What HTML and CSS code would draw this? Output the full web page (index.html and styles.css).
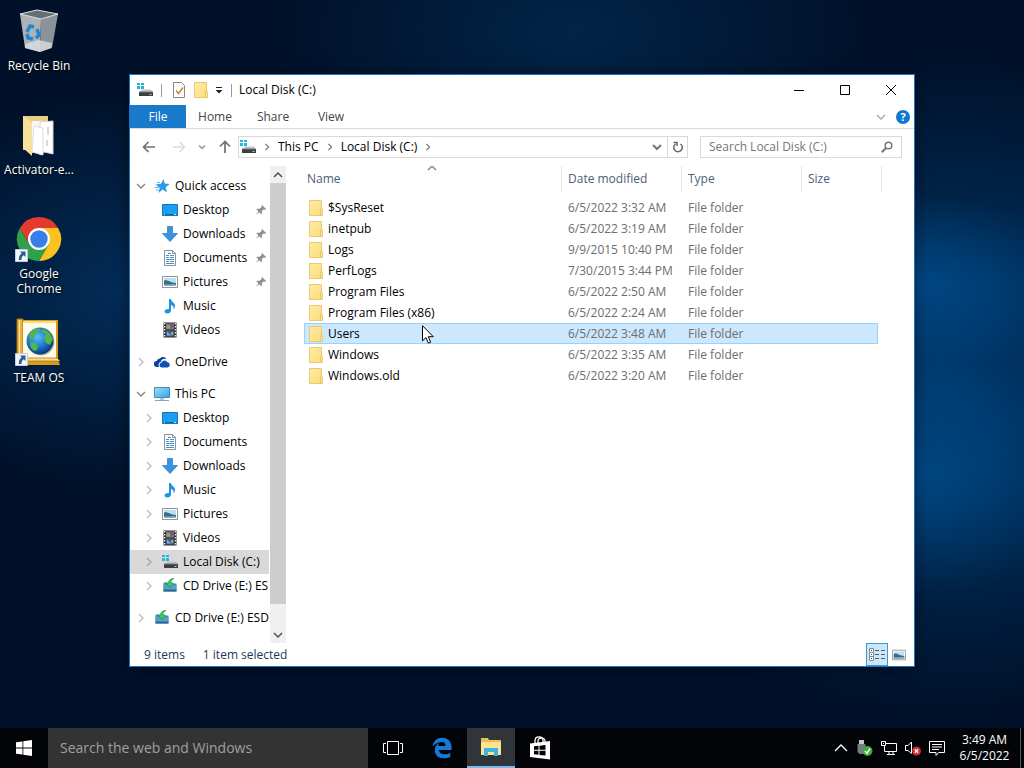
FILE: index.html
```
<!DOCTYPE html>
<html lang="en">

<head>
    <meta charset="UTF-8">
    <meta name="viewport" content="width=device-width, initial-scale=1.0">
    <title>Local Disk (C:)</title>
    <link rel="stylesheet" href="styles.css">
</head>

<body>
    <!-- shared icons -->
    <svg class="sprite" aria-hidden="true">
        <defs>
            <linearGradient id="gFolder" x1="0" y1="0" x2="1" y2="1">
                <stop offset="0" stop-color="#ffeca8" />
                <stop offset="1" stop-color="#fbdc7a" />
            </linearGradient>
            <linearGradient id="gScreen" x1="0" y1="0" x2="1" y2="1">
                <stop offset="0" stop-color="#9be0fb" />
                <stop offset="1" stop-color="#2fa5e4" />
            </linearGradient>
            <radialGradient id="gGlobe" cx="0.4" cy="0.35" r="0.65">
                <stop offset="0" stop-color="#58c4f4" />
                <stop offset="0.6" stop-color="#1b76c9" />
                <stop offset="1" stop-color="#0a3a7c" />
            </radialGradient>
        </defs>
        <symbol id="i-folder" viewBox="0 0 16 16">
            <path d="M1.500.5h12v15h-12z" fill="url(#gFolder)" stroke="#ecca6b" />
            <path d="M12.500 15.500V10l1-2 1 2v5.500z" fill="#fbe397" stroke="#e3bb51" stroke-width=".7" />
        </symbol>
        <symbol id="i-drive" viewBox="0 0 16 16">
            <path d="M0 1h3v2H0zM4 1h3v2H4zM0 4h3v3H0zM4 4h3v3H4z" fill="#25b5dc" />
            <path d="M3 10l2-2.500h9L15.500 10z" fill="#c3c6c8" />
            <path d="M2 10h14v4H2z" fill="#3b3f42" />
            <path d="M2 9.500h14v1H2z" fill="#74787b" />
            <path d="M12.500 12h2v1h-2z" fill="#a4dca4" />
        </symbol>
        <symbol id="i-star" viewBox="0 0 16 16">
            <path d="M9.500 1l1.200 4.500 5 .5-4 3.300 1.300 5.200-4.300-3L4.500 15l1.300-5.200L1.500 6.500 7 5.700z" fill="#2d9be8" />
            <path d="M1 9.500h4M2 12h3M3 4.500h3" stroke="#5fb3ee" />
        </symbol>
        <symbol id="i-desktop" viewBox="0 0 16 16">
            <path d="M.5 2.500h15v11H.5z" fill="#18a0f5" stroke="#1577bd" />
            <path d="M1 12h14v1H1z" fill="#0c67ab" />
            <path d="M2 12h1v1H2zM12 12h2v1h-2z" fill="#bfe5ff" />
        </symbol>
        <symbol id="i-down" viewBox="0 0 16 16">
            <path d="M5.500.5h5v7h5L8 15.500.5 7.500h5z" fill="#3a93dc" stroke="#3081c6" stroke-width=".8" />
        </symbol>
        <symbol id="i-doc" viewBox="0 0 16 16">
            <path d="M2.500.5h8l3 3v12h-11z" fill="#fff" stroke="#8b9299" />
            <path d="M10.500.5v3h3" fill="none" stroke="#8b9299" />
            <path d="M4 5.500h3M4 7.500h3M8 5.500h4M8 7.500h4M4 9.500h8M4 11.500h3M8 11.500h4M4 13.500h8M6 3.500h3" stroke="#4c8fc4" />
        </symbol>
        <symbol id="i-pic" viewBox="0 0 16 16">
            <path d="M.5 2.500h15v11H.5z" fill="#fff" stroke="#8f9498" />
            <path d="M2 4h12v8H2z" fill="#b9e0f3" />
            <path d="M2 6.500c4-1 6 2.500 12 2.500v3H2z" fill="#3f6a80" />
            <path d="M2 10.500c4 .5 8-1 12 0V12H2z" fill="#7fb4cd" />
        </symbol>
        <symbol id="i-music" viewBox="0 0 16 16">
            <path d="M7 1h2c0 3 4 3.500 4 7 0 1.500-.6 2.600-1.500 3.500.6-2.500-.5-4-2.500-4.500v5.500C9 14 7.500 15.500 5.500 15.500S2.500 14.600 2.500 13.500c0-1.500 2-2.800 4.500-2.500z" fill="#1e93e2" />
        </symbol>
        <symbol id="i-video" viewBox="0 0 16 16">
            <path d="M1.500.5h13v15h-13z" fill="#2c2c2e" />
            <path d="M4 1.500h8v6H4z" fill="#657aa0" />
            <path d="M4 8.500h8v6H4z" fill="#3d5f9c" />
            <path d="M5 3.500h3v3H5zM9 10h2v3H9z" fill="#c9973c" />
            <path d="M8.500 2.500h3v3h-3z" fill="#a8443c" />
            <path d="M5 9.500l4 4H5z" fill="#7faad8" />
            <path d="M2.700 1v14M13.300 1v14" stroke="#fff" stroke-width="1.200" stroke-dasharray="1.500 1.500" />
        </symbol>
        <symbol id="i-cloud" viewBox="0 0 16 16">
            <path d="M3 13a3 3 0 0 1-.4-6A3.600 3.600 0 0 1 6 4.500 4 4 0 0 1 12.500 5c-4-.8-5.500 1.500-5.800 3C4 8.500 4.500 12 5 13z" fill="#0c3f9e" />
            <path d="M7.500 13.500a2.400 2.400 0 0 1-.2-4.700 3.400 3.400 0 0 1 6.200-.6 2.700 2.700 0 0 1 .2 5.300z" fill="#0f50b8" />
        </symbol>
        <symbol id="i-pc" viewBox="0 0 16 16">
            <path d="M.5 1.500h15v10H.5z" fill="url(#gScreen)" stroke="#4d87a8" />
            <path d="M6 12h4v2H6z" fill="#a9c9db" />
            <path d="M1 14.500h14" stroke="#8ba3b1" />
        </symbol>
        <symbol id="i-cd" viewBox="0 0 16 16">
            <path d="M1.500 4.500h4l1 1h8v8h-13z" fill="#4b8db5" />
            <path d="M1.500 7h13v5h-13z" fill="#569fc8" />
            <path d="M1.500 11.500h13v2h-13z" fill="#2c668c" />
            <path d="M12 .5C8.500.5 6.500 2.500 6.500 5H4l4 4.500L11.500 5H9c0-2 .5-3 3-4.500z" fill="#35cf5d" stroke="#178a3a" stroke-width=".6" />
        </symbol>
        <symbol id="i-pin" viewBox="0 0 16 16">
            <path d="M9.500 2.500l4.500 4.500-1.500.6-1.500-.3L9 9.200l.2 2.300-1 1.300-2.200-2.300L2 14l3-4.200-2.200-2.300L4 6.500l2.300.2 2.200-1.800-.2-1.500z" fill="#8b9298" />
        </symbol>
        <symbol id="i-right" viewBox="0 0 8 10">
            <path d="M2 1l4 4-4 4" fill="none" stroke="currentColor" stroke-width="1.500" />
        </symbol>
        <symbol id="i-expand" viewBox="0 0 10 8">
            <path d="M1 2l4 4 4-4" fill="none" stroke="currentColor" stroke-width="1.500" />
        </symbol>
        <symbol id="i-collapse" viewBox="0 0 10 8">
            <path d="M1 6l4-4 4 4" fill="none" stroke="currentColor" stroke-width="1.500" />
        </symbol>
        <symbol id="i-shortcut" viewBox="0 0 13 13">
            <path d="M.5.5h12v12H.5z" fill="#f3f6f9" stroke="#c3ccd6" />
            <path d="M5 2.500h5.500V8L8.700 6.300C7 7.500 6.300 8.800 6.500 11H4C3.500 8.500 4.500 6 6.700 4.300z" fill="#2c5a95" />
        </symbol>
    </svg>

    <main class="desktop">
        <nav class="shortcuts">
            <a class="shortcut" href="#">
                <svg viewBox="0 0 48 48">
                    <path d="M5 8l21 5-1 33-15-4z" fill="#adb2b7" />
                    <path d="M26 13l17-5-6 34-12 4z" fill="#8b929a" />
                    <path d="M10 38l14-4 13 3-1 5-11 4-15-4z" fill="#dcdee0" opacity=".8" />
                    <path d="M5 8l17-4 21 4-17 5z" fill="#666e76" stroke="#dfe3e6" />
                    <g fill="none" stroke="#1f86d4" stroke-width="3.500">
                        <path d="M12 26l3-6 4 1" />
                        <path d="M22 23l2 6-3 3" />
                        <path d="M18 33l-5-1-1-4" />
                    </g>
                </svg>
                <span>Recycle Bin</span>
            </a>
            <a class="shortcut" href="#">
                <svg viewBox="0 0 48 48">
                    <path d="M8 6h25v34H8z" fill="#e9cf7e" />
                    <path d="M17 11h13v29l-13 3z" fill="#f7f7f7" />
                    <path d="M25 12l13-1v33l-9-2-4 3z" fill="#fff" stroke="#d4d4d4" />
                    <path d="M19 16l9 2v27l-11-3z" fill="#fff" stroke="#dcdcdc" />
                    <path d="M33 17v8M32 30v6" stroke="#b8b0a4" />
                    <path d="M8 6l9 6v34l-9-8z" fill="#f8e19a" />
                </svg>
                <span>Activator-e...</span>
            </a>
            <a class="shortcut" href="#">
                <svg viewBox="0 0 48 48">
                    <g transform="translate(2 3)">
                        <path d="M22 22L2.900 11A22 22 0 0 1 41.100 11z" fill="#e33b2e" />
                        <path d="M22 11h19.100A22 22 0 0 1 22 44l9.500-16.500z" fill="#fcc31e" />
                        <path d="M12.500 27.500L2.900 11A22 22 0 0 0 22 44l9.500-16.500z" fill="#2da14c" />
                        <path d="M2.900 11L12.500 27.500 22 11z" fill="#e33b2e" />
                        <circle cx="22" cy="22" r="11" fill="#fff" />
                        <circle cx="22" cy="22" r="8.700" fill="#3a7de8" />
                    </g>
                    <use href="#i-shortcut" x="0" y="35" width="13" height="13" />
                </svg>
                <span>Google Chrome</span>
            </a>
            <a class="shortcut" href="#">
                <svg viewBox="0 0 48 48">
                    <path d="M3 2h40v40l2 5H3z" fill="#d89b1e" />
                    <path d="M2 1h6v44H2z" fill="#e8b443" stroke="#a66c0c" />
                    <path d="M4.500 2v42" stroke="#fbe6a0" />
                    <path d="M8 3h33v37H8z" fill="#fffbe6" />
                    <path d="M8 4h33" stroke="#f7dd82" stroke-width="2" />
                    <path d="M8 40h34l3 3H8z" fill="#f6dd92" stroke="#b47a14" stroke-width=".8" />
                    <circle cx="26" cy="24" r="13.500" fill="#6a737c" opacity=".5" />
                    <circle cx="25" cy="23" r="13.500" fill="url(#gGlobe)" />
                    <path d="M14 17c3-6 8-7 11-6l-1 3-4 2-1 4-4 1zM28 10.500l7 4.500 3 6-3 6-4-2-2-5 2-4-4-2zM15 24l5 1 3 3-1 4-3 1-3-3z" fill="#54b548" />
                    <use href="#i-shortcut" x="0" y="35" width="13" height="13" />
                </svg>
                <span>TEAM OS</span>
            </a>
        </nav>

        <section class="window">
            <header class="titlebar">
                <svg class="icon"><use href="#i-drive" /></svg>
                <span class="sep"></span>
                <button class="quick" aria-label="Properties">
                    <svg class="icon" viewBox="0 0 16 16">
                        <path d="M2.500.5h8l3 3v12h-11z" fill="#fff" stroke="#8c8580" />
                        <path d="M5 8.500l2.500 3L12 5.500" fill="none" stroke="#c68a2b" stroke-width="1.500" />
                    </svg>
                </button>
                <button class="quick" aria-label="New folder"><svg class="icon"><use href="#i-folder" /></svg></button>
                <button class="quick more" aria-label="Customize">
                    <svg viewBox="0 0 8 8"><path d="M1 1.500h6" stroke="#222" /><path d="M.5 4h7L4 7.500z" fill="#222" /></svg>
                </button>
                <span class="sep"></span>
                <h1>Local Disk (C:)</h1>
                <div class="controls">
                    <button aria-label="Minimize"><svg viewBox="0 0 10 10"><path d="M0 5.500h10" stroke="#000" /></svg></button>
                    <button aria-label="Maximize"><svg viewBox="0 0 10 10"><path d="M.5.5h9v9h-9z" fill="none" stroke="#000" /></svg></button>
                    <button aria-label="Close"><svg viewBox="0 0 10 10"><path d="M0 0l10 10M10 0L0 10" stroke="#000" /></svg></button>
                </div>
            </header>

            <div class="ribbon">
                <button class="tab file">File</button>
                <button class="tab">Home</button>
                <button class="tab">Share</button>
                <button class="tab">View</button>
                <div class="ribbon-end">
                    <button aria-label="Expand ribbon"><svg class="chevron"><use href="#i-expand" /></svg></button>
                    <button class="help" aria-label="Help">?</button>
                </div>
            </div>

            <div class="toolbar">
                <button class="nav" aria-label="Back"><svg viewBox="0 0 14 14"><path d="M13 7H2M6.500 2L1.500 7l5 5" fill="none" stroke="#6f7174" stroke-width="1.700" /></svg></button>
                <button class="nav" aria-label="Forward"><svg viewBox="0 0 14 14"><path d="M1 7h11M7.500 2l5 5-5 5" fill="none" stroke="#dcdcdc" stroke-width="1.500" /></svg></button>
                <button class="nav recent" aria-label="Recent locations"><svg viewBox="0 0 8 6"><path d="M1 1.500l3 3 3-3" fill="none" stroke="#999" stroke-width="1.500" /></svg></button>
                <button class="nav" aria-label="Up"><svg viewBox="0 0 14 14"><path d="M7 13V2M2 6.500l5-5 5 5" fill="none" stroke="#6f7174" stroke-width="1.700" /></svg></button>
                <div class="address">
                    <svg class="icon"><use href="#i-drive" /></svg>
                    <svg class="crumb-arrow"><use href="#i-right" /></svg>
                    <a href="#">This PC</a>
                    <svg class="crumb-arrow"><use href="#i-right" /></svg>
                    <a href="#">Local Disk (C:)</a>
                    <svg class="crumb-arrow"><use href="#i-right" /></svg>
                    <button class="history" aria-label="Previous locations"><svg class="chevron" viewBox="0 0 10 8"><path d="M1 2l4 4 4-4" fill="none" stroke="#777" stroke-width="2" /></svg></button>
                    <button class="refresh" aria-label="Refresh">
                        <svg viewBox="0 0 12 12"><path d="M8.500 3a4.300 4.300 0 1 1-5 0M1.500 1.500h3.500V5" fill="none" stroke="#666" stroke-width="1.500" /></svg>
                    </button>
                </div>
                <div class="search">
                    <input type="text" placeholder="Search Local Disk (C:)" aria-label="Search Local Disk (C:)">
                    <svg viewBox="0 0 12 12"><circle cx="7.500" cy="4.500" r="3.300" fill="none" stroke="#777" stroke-width="1.500" /><path d="M5 7L.8 11.200" stroke="#777" stroke-width="2" /></svg>
                </div>
            </div>

            <div class="panes">
                <nav class="tree">
                    <ul>
                        <li><a href="#"><svg class="chevron open"><use href="#i-expand" /></svg><svg class="icon"><use href="#i-star" /></svg>Quick access</a>
                            <ul>
                                <li><a href="#"><svg class="icon"><use href="#i-desktop" /></svg>Desktop<svg class="pin"><use href="#i-pin" /></svg></a></li>
                                <li><a href="#"><svg class="icon"><use href="#i-down" /></svg>Downloads<svg class="pin"><use href="#i-pin" /></svg></a></li>
                                <li><a href="#"><svg class="icon"><use href="#i-doc" /></svg>Documents<svg class="pin"><use href="#i-pin" /></svg></a></li>
                                <li><a href="#"><svg class="icon"><use href="#i-pic" /></svg>Pictures<svg class="pin"><use href="#i-pin" /></svg></a></li>
                                <li><a href="#"><svg class="icon"><use href="#i-music" /></svg>Music</a></li>
                                <li><a href="#"><svg class="icon"><use href="#i-video" /></svg>Videos</a></li>
                            </ul>
                        </li>
                        <li><a href="#"><svg class="chevron"><use href="#i-right" /></svg><svg class="icon"><use href="#i-cloud" /></svg>OneDrive</a></li>
                        <li><a href="#"><svg class="chevron open"><use href="#i-expand" /></svg><svg class="icon"><use href="#i-pc" /></svg>This PC</a>
                            <ul>
                                <li><a href="#"><svg class="chevron"><use href="#i-right" /></svg><svg class="icon"><use href="#i-desktop" /></svg>Desktop</a></li>
                                <li><a href="#"><svg class="chevron"><use href="#i-right" /></svg><svg class="icon"><use href="#i-doc" /></svg>Documents</a></li>
                                <li><a href="#"><svg class="chevron"><use href="#i-right" /></svg><svg class="icon"><use href="#i-down" /></svg>Downloads</a></li>
                                <li><a href="#"><svg class="chevron"><use href="#i-right" /></svg><svg class="icon"><use href="#i-music" /></svg>Music</a></li>
                                <li><a href="#"><svg class="chevron"><use href="#i-right" /></svg><svg class="icon"><use href="#i-pic" /></svg>Pictures</a></li>
                                <li><a href="#"><svg class="chevron"><use href="#i-right" /></svg><svg class="icon"><use href="#i-video" /></svg>Videos</a></li>
                                <li><a class="current" href="#"><svg class="chevron"><use href="#i-right" /></svg><svg class="icon"><use href="#i-drive" /></svg>Local Disk (C:)</a></li>
                                <li><a href="#"><svg class="chevron"><use href="#i-right" /></svg><svg class="icon"><use href="#i-cd" /></svg>CD Drive (E:) ESD</a></li>
                            </ul>
                        </li>
                        <li><a href="#"><svg class="chevron"><use href="#i-right" /></svg><svg class="icon"><use href="#i-cd" /></svg>CD Drive (E:) ESD-</a></li>
                    </ul>
                </nav>
                <div class="scrollbar">
                    <button aria-label="Scroll up"><svg class="chevron"><use href="#i-collapse" /></svg></button>
                    <div class="thumb"></div>
                    <button aria-label="Scroll down"><svg class="chevron"><use href="#i-expand" /></svg></button>
                </div>
                <div class="files">
                    <table>
                        <colgroup>
                            <col class="c-name">
                            <col class="c-date">
                            <col class="c-type">
                            <col class="c-size">
                            <col class="c-end">
                        </colgroup>
                        <thead>
                            <tr>
                                <th class="sorted">Name<svg class="sort"><use href="#i-collapse" /></svg></th>
                                <th>Date modified</th>
                                <th>Type</th>
                                <th colspan="2">Size</th>
                            </tr>
                        </thead>
                        <tbody>
                            <tr><td><svg class="icon"><use href="#i-folder" /></svg>$SysReset</td><td>6/5/2022 3:32 AM</td><td>File folder</td><td></td></tr>
                            <tr><td><svg class="icon"><use href="#i-folder" /></svg>inetpub</td><td>6/5/2022 3:19 AM</td><td>File folder</td><td></td></tr>
                            <tr><td><svg class="icon"><use href="#i-folder" /></svg>Logs</td><td>9/9/2015 10:40 PM</td><td>File folder</td><td></td></tr>
                            <tr><td><svg class="icon"><use href="#i-folder" /></svg>PerfLogs</td><td>7/30/2015 3:44 PM</td><td>File folder</td><td></td></tr>
                            <tr><td><svg class="icon"><use href="#i-folder" /></svg>Program Files</td><td>6/5/2022 2:50 AM</td><td>File folder</td><td></td></tr>
                            <tr><td><svg class="icon"><use href="#i-folder" /></svg>Program Files (x86)</td><td>6/5/2022 2:24 AM</td><td>File folder</td><td></td></tr>
                            <tr class="selected"><td><svg class="icon"><use href="#i-folder" /></svg>Users</td><td>6/5/2022 3:48 AM</td><td>File folder</td><td></td></tr>
                            <tr><td><svg class="icon"><use href="#i-folder" /></svg>Windows</td><td>6/5/2022 3:35 AM</td><td>File folder</td><td></td></tr>
                            <tr><td><svg class="icon"><use href="#i-folder" /></svg>Windows.old</td><td>6/5/2022 3:20 AM</td><td>File folder</td><td></td></tr>
                        </tbody>
                    </table>
                </div>
            </div>

            <footer class="status">
                <span>9 items</span>
                <span>1 item selected</span>
                <div class="views">
                    <button class="on" aria-label="Details">
                        <svg viewBox="0 0 16 16"><path d="M.5 1.500h4v4h-4zM.5 5.500h4v4h-4zM.5 9.500h4v4h-4z" fill="#fff" stroke="#7d8e99" /><path d="M2 3.500h1M2 7.500h1M2 11.500h1" stroke="#444" /><path d="M6 3.500h10M6 7.500h10M6 11.500h10" stroke="#54626b" stroke-dasharray="4 2" /></svg>
                    </button>
                    <button aria-label="Large icons"><svg viewBox="0 0 16 16"><use href="#i-pic" /></svg></button>
                </div>
            </footer>
        </section>

        <svg class="cursor" viewBox="0 0 12 19">
            <path d="M.5.700v15.200l3.500-3.300 2.400 5.600 2.300-1-2.400-5.500h5z" fill="#fff" stroke="#000" />
        </svg>
    </main>

    <footer class="taskbar">
        <button class="task" aria-label="Start">
            <svg viewBox="0 0 16 16"><path d="M0 2.300L6.500 1.400v6.200H0zM7.300 1.300L16 0v7.600H7.300zM0 8.400h6.500v6.200L0 13.700zM7.300 8.400H16V16l-8.700-1.300z" fill="#fff" /></svg>
        </button>
        <input class="web-search" type="text" placeholder="Search the web and Windows" aria-label="Search the web and Windows">
        <button class="task" aria-label="Task view">
            <svg class="wide" viewBox="0 0 20 16"><path d="M4.500 1.500h11v13h-11zM3 3.500H.5v9H3M17 3.500h2.500v9H17" fill="none" stroke="#fff" /></svg>
        </button>
        <button class="task" aria-label="Edge">
            <svg class="edge" viewBox="0 0 20 22"><path d="M.5 9.500C1.500 4 5 .8 10.300.8c6 0 9.300 4.300 9.300 9.700v2.400H7c.2 3 2.600 4.300 5.600 4.300 2.200 0 4-.5 5.700-1.500v4.100c-1.900 1.100-4.300 1.500-6.700 1.500-5.600 0-8.800-3.300-8.800-8 0-3.500 1.800-6 4.800-7.500-.8.900-1.200 2-1.300 3.200h7.200c0-2.600-1-4.100-3.600-4.100-3.400 0-6.900 1.800-9.400 4.600z" fill="#1579d5" /></svg>
        </button>
        <button class="task active" aria-label="File Explorer">
            <svg class="big" viewBox="0 0 22 22"><path d="M1 2h7l1 2h12v14H1z" fill="#e8bf55" /><path d="M1 6h20v13H1z" fill="#fce492" /><path d="M4 12h14v8h-4v-4H8v4H4z" fill="#3fb2df" /></svg>
        </button>
        <button class="task" aria-label="Store">
            <svg class="big" viewBox="0 0 22 24"><path d="M6 7V4.500C6 2 8 .8 10 .8s4 1.200 4 3.700V7M9 7V5c0-2 1.500-3 3.500-3S16 3.500 16 5v1" fill="none" stroke="#fff" stroke-width="1.300" /><path d="M1 7.500L21 5v18.500L1 21z" fill="#fff" /><path d="M5 10.300l4.500-.5v4H5zM10.500 9.700l6-.7v4.800h-6zM5 14.800h4.500v4L5 18.300zM10.500 14.800h6v4.800l-6-.7z" fill="#000" /></svg>
        </button>
        <div class="tray">
            <button aria-label="Show hidden icons"><svg viewBox="0 0 16 16"><path d="M2 11l6-6 6 6" fill="none" stroke="#fff" stroke-width="1.300" /></svg></button>
            <button aria-label="Safely remove hardware">
                <svg viewBox="0 0 16 16"><path d="M2 0h5v4H2z" fill="#c3c6c8" /><path d="M.5 4h8v8l-2 2h-4l-2-2z" fill="#777c80" /><circle cx="10.500" cy="11" r="5" fill="#3cab35" /><path d="M8 11l2 2.500L13 8.500" fill="none" stroke="#fff" stroke-width="1.500" /></svg>
            </button>
            <button aria-label="Network"><svg viewBox="0 0 16 16"><path d="M4.500 3.500h11v8H3.500V6M8 11.500v3M12 11.500v3M6 14.500h8M.5 1.500h4v4h-4zM2 3.500h1" fill="none" stroke="#fff" /></svg></button>
            <button aria-label="Volume">
                <svg viewBox="0 0 16 16"><path d="M.5 5.500h2.500L6.500 2v11.500L3 10.500H.5z" fill="none" stroke="#fff" /><circle cx="11.500" cy="11" r="4.500" fill="#d42b33" /><path d="M9.800 9.300l3.400 3.400M13.200 9.300l-3.400 3.400" stroke="#fff" stroke-width="1.300" /></svg>
            </button>
            <button aria-label="Notifications"><svg viewBox="0 0 16 16"><path d="M.5 1.500h15v11h-6l-2.500 3v-3H.5zM3 4.500h10M3 7h10M3 9.500h7" fill="none" stroke="#fff" /></svg></button>
            <button class="clock"><span>3:49 AM</span><span>6/5/2022</span></button>
            <button class="peek" aria-label="Show desktop"></button>
        </div>
    </footer>
</body>

</html>
```
FILE: styles.css
```
* {
    box-sizing: border-box;
    margin: 0;
    padding: 0;
}

body {
    display: flex;
    flex-direction: column;
    height: 100vh;
    overflow: hidden;
    font: 12px/16px "Open Sans", "Noto Sans", sans-serif;
    color: #000;
    background:
        radial-gradient(ellipse 170px 90px at 90% 37%, rgba(0, 82, 150, .7) 0%, rgba(0, 82, 150, 0) 100%),
        radial-gradient(ellipse 170px 120px at 90% 62%, rgba(0, 80, 146, .7) 0%, rgba(0, 80, 146, 0) 100%),
        radial-gradient(ellipse 400px 330px at 92% 50%, #003a6e 0%, rgba(0, 58, 110, 0) 100%),
        radial-gradient(ellipse 260px 200px at 12% 38%, #032c58 0%, rgba(3, 44, 88, 0) 100%),
        radial-gradient(ellipse 300px 160px at 56% 4%, #022447 0%, rgba(2, 36, 71, 0) 100%),
        #001129;
}

a {
    color: inherit;
    text-decoration: none;
}

button,
input {
    border: 0;
    background: none;
    font: inherit;
    color: inherit;
}

button {
    display: flex;
    align-items: center;
    justify-content: center;
}

ul {
    list-style: none;
}

svg {
    display: block;
    flex: none;
}

.sprite {
    position: absolute;
    width: 0;
    height: 0;
}

.icon {
    width: 16px;
    height: 16px;
}

.chevron {
    width: 10px;
    height: 10px;
}

/* desktop */
.desktop {
    position: relative;
    flex: 1;
    min-height: 0;
}

.shortcuts {
    display: grid;
    grid-auto-rows: 104px;
    width: 78px;
    padding-top: 6px;
}

.shortcut {
    display: flex;
    flex-direction: column;
    align-items: center;
    gap: 4px;
    line-height: 15px;
    text-align: center;
    color: #fff;
    text-shadow: 1px 1px 2px #000;
}

.shortcut svg {
    width: 48px;
    height: 48px;
}

.shortcut span {
    max-width: 70px;
}

.cursor {
    position: absolute;
    left: 422px;
    top: 325px;
    width: 12px;
    height: 19px;
}

/* explorer window */
.window {
    position: absolute;
    inset: 74px 109px 61px 129px;
    display: flex;
    flex-direction: column;
    border: 1px solid #1875c7;
    background: #fff;
    box-shadow: 0 2px 12px rgba(0, 0, 0, .5);
}

.titlebar {
    display: flex;
    align-items: center;
    height: 30px;
    padding-left: 7px;
}

.titlebar h1 {
    margin-left: 7px;
    font-size: 12px;
    font-weight: normal;
}

.sep {
    width: 1px;
    height: 13px;
    margin-left: 8px;
    background: #999;
}

.quick {
    margin-left: 6px;
}

.sep + .quick {
    margin-left: 9px;
}

.more svg {
    width: 8px;
    height: 8px;
}

.controls {
    display: flex;
    margin-left: auto;
}

.controls button {
    width: 46px;
    height: 30px;
}

.controls svg {
    width: 10px;
    height: 10px;
}

.ribbon {
    display: flex;
    height: 24px;
    border-bottom: 1px solid #dadbdc;
}

.tab {
    width: 58px;
    color: #444;
}

.tab.file {
    width: 56px;
    background: #1979ca;
    color: #fff;
}

.ribbon-end {
    display: flex;
    align-items: center;
    gap: 10px;
    margin-left: auto;
    padding-right: 4px;
    color: #aaa;
}

.help {
    width: 14px;
    height: 14px;
    border-radius: 50%;
    background: #1177cc;
    color: #fff;
    font-size: 11px;
    font-weight: bold;
}

.toolbar {
    display: flex;
    align-items: center;
    height: 36px;
    padding: 0 12px 0 8px;
}

.nav {
    width: 22px;
    height: 22px;
    margin-right: 8px;
}

.nav svg {
    width: 14px;
    height: 14px;
}

.nav.recent {
    width: 8px;
}

.nav.recent svg {
    width: 8px;
    height: 6px;
}

.recent + .nav {
    margin-right: 2px;
}

.address {
    display: flex;
    flex: 1;
    align-items: center;
    height: 22px;
    padding-left: 1px;
    border: 1px solid #d9d9d9;
}

.crumb-arrow {
    width: 8px;
    height: 8px;
    margin: 0 7px;
    color: #777;
}

.history {
    width: 20px;
    height: 20px;
    margin-left: auto;
}

.refresh {
    width: 20px;
    height: 20px;
    border-left: 1px solid #d9d9d9;
}

.refresh svg,
.search svg {
    width: 12px;
    height: 12px;
}

.search {
    display: flex;
    align-items: center;
    width: 202px;
    height: 22px;
    margin-left: 12px;
    padding: 0 8px;
    border: 1px solid #d9d9d9;
}

.search input {
    flex: 1;
    min-width: 0;
    outline: 0;
}

.search input::placeholder {
    color: #767676;
}

/* navigation tree */
.panes {
    display: flex;
    flex: 1;
    min-height: 0;
    padding-top: 1px;
}

.tree {
    width: 139px;
    padding-top: 8px;
    overflow: hidden;
}

.tree > ul > li {
    margin-bottom: 8px;
}

.tree a {
    display: flex;
    align-items: center;
    gap: 5px;
    height: 24px;
    padding-left: 24px;
    white-space: nowrap;
}

.tree li li a {
    padding-left: 32px;
}

.tree a .chevron {
    margin: 0 3px 0 -18px;
    color: #c4c4c4;
}

.tree a .open {
    color: #888;
}

.tree a.current {
    background: #d9d9d9;
}

.tree a.current .chevron {
    color: #aaa;
}

.pin {
    width: 14px;
    height: 14px;
    margin: 0 1px 0 auto;
}

.scrollbar {
    display: flex;
    flex-direction: column;
    width: 16px;
    margin-left: 1px;
    background: #f0f0f0;
    color: #505050;
}

.scrollbar button {
    height: 17px;
}

.thumb {
    height: 421px;
    margin-bottom: auto;
    background: #cdcdcd;
}

/* file list */
.files {
    flex: 1;
    padding-left: 18px;
    overflow: hidden;
}

.files table {
    table-layout: fixed;
    width: 578px;
    border-spacing: 0;
}

.c-name {
    width: 258px;
}

.c-date,
.c-type {
    width: 120px;
}

.c-size {
    width: 76px;
}

.c-end {
    width: 4px;
}

.files th {
    height: 26px;
    padding-left: 6px;
    border-right: 1px solid #e5e5e5;
    font-weight: normal;
    text-align: left;
    color: #4c607a;
}

.files .sorted {
    position: relative;
    padding-left: 3px;
}

.sort {
    position: absolute;
    top: -2px;
    left: calc(50% - 6px);
    width: 10px;
    height: 8px;
    color: #888;
}

.files tbody::before {
    content: "";
    display: block;
    height: 5px;
}

.files td {
    height: 21px;
    padding-left: 6px;
    border: solid transparent;
    border-width: 1px 0;
    line-height: 16px;
    color: #6d6d6d;
    white-space: nowrap;
}

.files td:first-child {
    padding-left: 3px;
    border-left-width: 1px;
    color: #000;
}

.files td:last-child {
    border-right-width: 1px;
}

.files td .icon {
    display: inline-block;
    margin-right: 4px;
    vertical-align: top;
}

.files .selected td {
    border-color: #99d1ff;
    background: #cce8ff;
}

.status {
    display: flex;
    align-items: center;
    gap: 18px;
    height: 23px;
    padding-left: 14px;
    color: #1e395b;
}

.views {
    display: flex;
    margin-left: auto;
    padding-right: 4px;
}

.views button {
    width: 22px;
    height: 23px;
}

.views svg {
    width: 16px;
    height: 16px;
}

.views button + button svg {
    width: 14px;
    height: 14px;
}

.views .on {
    border: 1px solid #3a9bd9;
    background: #cbe8f8;
}

/* taskbar */
.taskbar {
    display: flex;
    height: 40px;
    background: #020407;
    color: #fff;
}

.task {
    width: 48px;
    margin-left: 1px;
}

.task:first-child {
    margin-left: 0;
}

.task svg {
    width: 16px;
    height: 16px;
}

.task .wide {
    width: 20px;
}

.task .big {
    width: 22px;
    height: 24px;
}

.task .edge {
    width: 20px;
    height: 22px;
}

.task.active {
    background: #30353a;
    border-bottom: 2px solid #76b9ed;
}

.web-search {
    width: 320px;
    padding: 0 12px;
    background: #333;
    font-size: 14px;
    outline: 0;
}

.web-search::placeholder {
    color: #a0a0a0;
}

.tray {
    display: flex;
    margin-left: auto;
}

.tray button {
    width: 24px;
}

.tray svg {
    width: 16px;
    height: 16px;
}

.tray .clock {
    flex-direction: column;
    width: 71px;
}

.tray .peek {
    width: 4px;
    border-left: 1px solid #555;
}
```
